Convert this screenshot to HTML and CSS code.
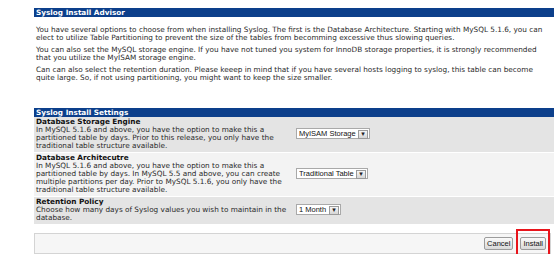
FILE: index.html
```html
<!DOCTYPE html>
<html>
<head>
    <title>Syslog Install</title>
    <link rel="stylesheet" href="styles.css">
</head>
<body>
    <div class="page">
        <div class="panel-head">Syslog Install Advisor</div>
        <div class="advisor">
            <p>You have several options to choose from when installing Syslog. The first is the Database Architecture. Starting with MySQL 5.1.6, you can elect to utilize Table Partitioning to prevent the size of the tables from becomming excessive thus slowing queries.</p>
            <p>You can also set the MySQL storage engine. If you have not tuned you system for InnoDB storage properties, it is strongly recommended that you utilize the MyISAM storage engine.</p>
            <p>Can can also select the retention duration. Please keeep in mind that if you have several hosts logging to syslog, this table can become quite large. So, if not using partitioning, you might want to keep the size smaller.</p>
        </div>

        <table class="settings">
            <thead>
                <tr><th colspan="2">Syslog Install Settings</th></tr>
            </thead>
            <tbody>
                <tr class="odd">
                    <td class="label">
                        <b>Database Storage Engine</b><br>
                        In MySQL 5.1.6 and above, you have the option to make this a partitioned table by days. Prior to this release, you only have the traditional table structure available.
                    </td>
                    <td class="field">
                        <span class="select"><select name="engine"><option>MyISAM Storage</option><option>InnoDB Storage</option></select></span>
                    </td>
                </tr>
                <tr class="even">
                    <td class="label">
                        <b>Database Architecutre</b><br>
                        In MySQL 5.1.6 and above, you have the option to make this a partitioned table by days. In MySQL 5.5 and above, you can create multiple partitions per day. Prior to MySQL 5.1.6, you only have the traditional table structure available.
                    </td>
                    <td class="field">
                        <span class="select"><select name="mode"><option>Traditional Table</option><option>Partitioned</option></select></span>
                    </td>
                </tr>
                <tr class="odd">
                    <td class="label">
                        <b>Retention Policy</b><br>
                        Choose how many days of Syslog values you wish to maintain in the database.
                    </td>
                    <td class="field">
                        <span class="select"><select name="days"><option>1 Month</option><option>1 Week</option></select></span>
                    </td>
                </tr>
            </tbody>
        </table>

        <div class="actions">
            <button type="button">Cancel</button>
            <span class="highlight"><button type="button">Install</button></span>
        </div>
    </div>
</body>
</html>
```

FILE: styles.css
```css
body {
    margin: 0;
    background-color: #fff;
    font-family: "DejaVu Sans", Verdana, sans-serif;
    font-size: 7.3px;
    line-height: 7.6px;
    color: #2a2a2a;
}

.page {
    margin-left: 34px;
    padding-top: 8px;
}

.panel-head, .settings th {
    background-color: #0c3f8b;
    color: #fff;
    font-weight: bold;
    text-align: left;
    height: 9px;
    line-height: 9px;
    padding: 0 0 0 2px;
}

.advisor {
    padding: 9px 6px 0 2px;
}

.advisor p {
    margin: 0 0 5px 0;
}

.settings {
    width: 100%;
    margin-top: 26px;
    border-collapse: separate;
    border-spacing: 0;
}

.settings td {
    padding: 1px 2px 2px 2px;
    line-height: 8px;
    vertical-align: middle;
    border-bottom: 1px solid #fff;
}

.settings b {
    color: #111;
}

.odd td {
    background-color: #e4e4e4;
}

.even td {
    background-color: #f3f3f3;
}

.label {
    width: 256px;
}

.field {
    padding-left: 4px;
}

.select {
    position: relative;
    display: inline-block;
}

.select select {
    appearance: none;
    -webkit-appearance: none;
    font-family: "Liberation Sans", Arial, sans-serif;
    font-size: 7.5px;
    height: 11px;
    padding: 0 13px 0 2px;
    border: 1px solid #a9a9a9;
    border-radius: 0;
    background-color: #fff;
    color: #111;
}

.select::after {
    content: "\25BE";
    position: absolute;
    right: 2px;
    top: 2px;
    width: 8px;
    height: 7px;
    border: 1px solid #9a9a9a;
    background: linear-gradient(#f6f6f6, #d6d6d6);
    font-size: 7px;
    line-height: 7px;
    text-align: center;
    color: #222;
}

.actions {
    display: flex;
    justify-content: flex-end;
    align-items: center;
    gap: 7px;
    margin: 8px 3px 0 0;
    height: 19px;
    padding-right: 4px;
    border: 1px solid #d4d4d4;
    background-color: #f6f6f6;
}

button {
    font-family: "Liberation Sans", Arial, sans-serif;
    font-size: 7.5px;
    height: 13px;
    padding: 0 2px;
    border: 1px solid #9c9c9c;
    border-radius: 2px;
    background: linear-gradient(#fafafa, #d9d9d9);
    color: #111;
}

.highlight {
    position: relative;
    display: inline-block;
    line-height: 0;
}

.highlight::after {
    content: "";
    position: absolute;
    top: -8px;
    bottom: -9px;
    left: -4px;
    right: -4px;
    border: 2px solid #e8141b;
}
```
